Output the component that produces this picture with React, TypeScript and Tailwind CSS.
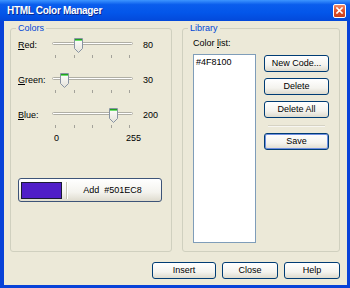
import React from "react";

const sliders = [
  { key: "R", rest: "ed:", value: 80 },
  { key: "G", rest: "reen:", value: 30 },
  { key: "B", rest: "lue:", value: 200 },
];

const btn =
  "flex items-center justify-center rounded-[3px] border border-[#003c74] bg-[linear-gradient(180deg,#ffffff_0%,#f4f3ee_60%,#dedbce_100%)] text-black";

function Thumb({ left }: { left: number }) {
  return (
    <svg
      width="9"
      height="16"
      viewBox="0 0 9 16"
      className="absolute top-[1px]"
      style={{ left }}
    >
      <defs>
        <linearGradient id="tg" x1="0" x2="0" y1="0" y2="1">
          <stop offset="0" stopColor="#ffffff" />
          <stop offset="1" stopColor="#e4e2d8" />
        </linearGradient>
      </defs>
      <path d="M0.5 0.5 H8.5 V10.5 L4.5 14.5 L0.5 10.5 Z" fill="url(#tg)" stroke="#8793a2" />
      <rect x="1" y="1" width="7" height="1" fill="#21a121" />
      <rect x="1" y="2" width="7" height="1" fill="#6fdc6f" />
    </svg>
  );
}

function Slider({ k, rest, value }: { k: string; rest: string; value: number }) {
  const left = 3.5 + (value / 255) * 73.5 - 4.5;
  return (
    <div className="flex flex-col">
      <div className="flex h-[16px] items-center">
        <span className="w-[34px]">
          <u className="underline-offset-1">{k}</u>
          {rest}
        </span>
        <div className="relative w-[81px] self-stretch">
          <div className="mt-[5px] h-[3px] rounded-full border border-[#b0afa5] bg-white" />
          <Thumb left={left} />
        </div>
        <span className="ml-[10px]">{value}</span>
      </div>
      <div className="ml-[34px] mt-[2px] flex w-[81px] justify-between px-[3px]">
        {[0, 1, 2, 3, 4].map((i) => (
          <div key={i} className="h-[3px] w-px bg-[#a3a29a]" />
        ))}
      </div>
    </div>
  );
}

export default function App() {
  return (
    <div className="flex h-[288px] w-[350px] flex-col bg-[#0842d8] font-['Liberation_Sans',Arial,sans-serif] text-[9px] leading-[11px] text-black">
      {/* title bar */}
      <div className="flex h-[21px] shrink-0 items-center bg-[linear-gradient(180deg,#3d95ff_0%,#0a5ded_22%,#0356ea_60%,#0349da_100%)] pl-[7px] pr-[4px]">
        <span className="flex-1 text-[10px] font-bold tracking-[-0.3px] text-white [text-shadow:1px_1px_#0b2a8f]">
          HTML Color Manager
        </span>
        <div className="flex h-[14px] w-[13px] items-center justify-center rounded-[2px] border border-white bg-[linear-gradient(180deg,#f08a68,#e0512b_50%,#c8401c)]">
          <svg width="7" height="7" viewBox="0 0 7 7">
            <path d="M1 1 L6 6 M6 1 L1 6" stroke="white" strokeWidth="1.6" strokeLinecap="square" />
          </svg>
        </div>
      </div>

      {/* client */}
      <div className="ml-[4px] mr-[3px] mb-[3px] flex flex-1 flex-col bg-[#ece9d8] pl-[6px] pr-[7px] pt-[2px]">
        <div className="flex h-[229px] gap-[10px]">
          <fieldset className="w-[162px] rounded-[3px] border border-[#d0d0bf] pl-[7px]">
            <legend className="ml-[-2px] px-[2px] text-[#0046d5]">Colors</legend>
            <div className="flex flex-col pt-[3px]">
              <Slider k={sliders[0].key} rest={sliders[0].rest} value={sliders[0].value} />
              <div className="mt-[14px]">
                <Slider k={sliders[1].key} rest={sliders[1].rest} value={sliders[1].value} />
              </div>
              <div className="mt-[14px]">
                <Slider k={sliders[2].key} rest={sliders[2].rest} value={sliders[2].value} />
              </div>
              <div className="ml-[36px] mt-[5px] flex w-[87px] justify-between">
                <span>0</span>
                <span>255</span>
              </div>
              <div className={`${btn} mt-[34px] h-[24px] w-[144px] justify-start border-[#3d5478]`}>
                <div className="ml-[2px] h-[17px] w-[41px] border border-[#1b1b33] bg-[#501EC8]" />
                <div className="ml-[4px] h-[17px] w-px bg-[#c8c5b6]" />
                <div className="h-[17px] w-px bg-white" />
                <span className="flex-1 pr-[4px] text-center">Add&nbsp;&nbsp;#501EC8</span>
              </div>
            </div>
          </fieldset>

          <fieldset className="w-[158px] rounded-[3px] border border-[#d0d0bf] pl-[10px]">
            <legend className="ml-[-5px] px-[2px] text-[#0046d5]">Library</legend>
            <div className="pt-[4px]">
              Color <u className="underline-offset-1">l</u>ist:
            </div>
            <div className="mt-[5px] flex">
              <div className="h-[189px] w-[63px] border border-[#7f9db9] bg-white pl-[2px] pt-[1px] leading-[12px]">
                #4F8100
              </div>
              <div className="ml-[8px] flex w-[65px] flex-col pt-[1px]">
                <div className={`${btn} h-[17px]`}>New Code...</div>
                <div className={`${btn} mt-[6px] h-[17px]`}>Delete</div>
                <div className={`${btn} mt-[6px] h-[17px]`}>Delete All</div>
                <div className="mx-[4px] mt-[7px] h-px bg-[#d6d3c4]" />
                <div className="mx-[4px] h-px bg-[#f7f6f1]" />
                <div className={`${btn} mt-[6px] h-[17px] shadow-[inset_0_0_0_1px_#6f8fe0]`}>Save</div>
              </div>
            </div>
          </fieldset>
        </div>

        <div className="mt-[10px] flex justify-end gap-[6px]">
          <div className={`${btn} h-[17px] w-[64px]`}>Insert</div>
          <div className={`${btn} h-[17px] w-[56px]`}>Close</div>
          <div className={`${btn} h-[17px] w-[56px]`}>Help</div>
        </div>
      </div>
    </div>
  );
}
